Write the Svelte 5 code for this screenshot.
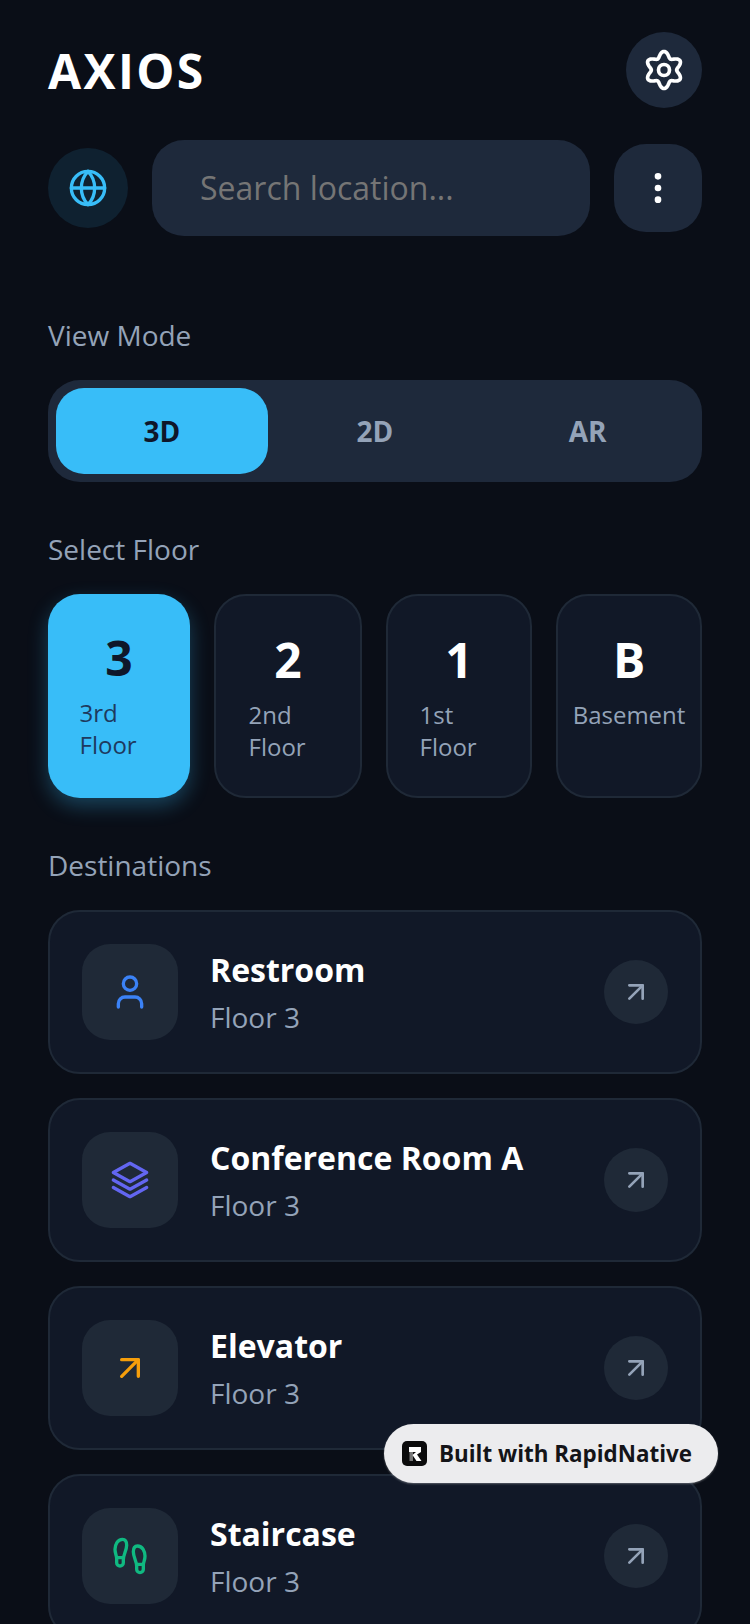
<script>
	const modes = ['3D', '2D', 'AR'];
	const floors = [
		{ id: '3', name: '3rd Floor' },
		{ id: '2', name: '2nd Floor' },
		{ id: '1', name: '1st Floor' },
		{ id: 'B', name: 'Basement' }
	];
	const destinations = [
		{ name: 'Restroom', kind: 'person' },
		{ name: 'Conference Room A', kind: 'layers' },
		{ name: 'Elevator', kind: 'arrow' },
		{ name: 'Staircase', kind: 'feet' }
	];

	// wavy six lobed gear outline
	let gearPath = '';
	for (let i = 0; i < 120; i++) {
		const a = (i / 120) * Math.PI * 2;
		const r = 8.5 + 1.6 * Math.cos(6 * (a - Math.PI / 2));
		const x = 12 + r * Math.cos(a);
		const y = 12 + r * Math.sin(a);
		gearPath += (i === 0 ? 'M' : 'L') + x.toFixed(2) + ' ' + y.toFixed(2);
	}
	gearPath += 'Z';
</script>

<div class="page">
	<header class="header">
		<h1>AXIOS</h1>
		<button class="gear">
			<svg width="44" height="44" viewBox="0 0 24 24" class="icon" stroke="#fff">
				<path d={gearPath} />
				<circle cx="12" cy="12" r="3" />
			</svg>
		</button>
	</header>

	<div class="search-row">
		<div class="globe">
			<svg width="40" height="40" viewBox="0 0 24 24" class="icon" stroke="#38bdf8">
				<circle cx="12" cy="12" r="10" />
				<path d="M12 2a14.5 14.5 0 0 0 0 20 14.5 14.5 0 0 0 0-20" />
				<path d="M2 12h20" />
			</svg>
		</div>
		<div class="search">Search location...</div>
		<button class="more">
			<svg width="40" height="40" viewBox="0 0 24 24" class="icon" stroke="#fff">
				<circle cx="12" cy="5" r="1" />
				<circle cx="12" cy="12" r="1" />
				<circle cx="12" cy="19" r="1" />
			</svg>
		</button>
	</div>

	<h2 class="label first">View Mode</h2>
	<div class="modes">
		{#each modes as mode, i}
			<div class="mode" class:active={i === 0}>{mode}</div>
		{/each}
	</div>

	<h2 class="label">Select Floor</h2>
	<div class="floors">
		{#each floors as floor, i}
			<div class="floor" class:active={i === 0}>
				<div class="floor-id">{floor.id}</div>
				<div class="floor-name" class:wide={floor.id === 'B'}>{floor.name}</div>
			</div>
		{/each}
	</div>

	<h2 class="label">Destinations</h2>
	<div class="list">
		{#each destinations as item}
			<div class="card">
				<div class="card-icon">
					{#if item.kind === 'person'}
						<svg width="40" height="40" viewBox="0 0 24 24" class="icon" stroke="#3b82f6">
							<path d="M19 21v-2a4 4 0 0 0-4-4H9a4 4 0 0 0-4 4v2" />
							<circle cx="12" cy="7" r="4" />
						</svg>
					{:else if item.kind === 'layers'}
						<svg width="40" height="40" viewBox="0 0 24 24" class="icon" stroke="#6366f1">
							<path d="M12 2 2 7.5 12 13l10-5.5z" />
							<path d="m2 12 10 5.5L22 12" />
							<path d="m2 16.5 10 5.5 10-5.5" />
						</svg>
					{:else if item.kind === 'arrow'}
						<svg width="40" height="40" viewBox="0 0 24 24" class="icon" stroke="#f59e0b">
							<path d="M7 7h10v10" />
							<path d="M7 17 17 7" />
						</svg>
					{:else}
						<svg width="40" height="40" viewBox="0 0 24 24" class="icon" stroke="#10b981">
							<path d="M4 16v-2.38C4 11.5 2.97 10.5 3 8c.03-2.72 1.49-6 4.5-6C9.37 2 10 3.8 10 5.5c0 3.11-2 5.66-2 8.68V16a2 2 0 1 1-4 0Z" />
							<path d="M20 20v-2.38c0-2.12 1.03-3.12 1-5.62-.03-2.72-1.44-6-4.5-6C14.63 6 14 7.8 14 9.5c0 3.16 2 5.64 2 8.68V20a2 2 0 1 0 4 0Z" />
							<path d="M16 17h4" />
							<path d="M4 13h4" />
						</svg>
					{/if}
				</div>
				<div class="card-text">
					<div class="card-title">{item.name}</div>
					<div class="card-sub">Floor 3</div>
				</div>
				<div class="go">
					<svg width="32" height="32" viewBox="0 0 24 24" class="icon" stroke="#94a3b8">
						<path d="M7 7h10v10" />
						<path d="M7 17 17 7" />
					</svg>
				</div>
			</div>
		{/each}
	</div>

	<div class="badge">
		<svg width="25" height="25" viewBox="0 0 25 25">
			<rect width="25" height="25" rx="5" fill="#0b0b0c" />
			<rect x="7.5" y="11" width="3.5" height="9" fill="#777" />
			<path d="M7 6h12v5l-4 2.5 4.5 6.5h-5l-4-6 3.5-3H7z" fill="#fff" />
		</svg>
		<span>Built with RapidNative</span>
	</div>
</div>

<style>
	:global(body) {
		background: #0a0e17;
	}

	.page {
		position: relative;
		box-sizing: border-box;
		height: 1624px;
		overflow: hidden;
		padding: 32px 48px 0;
		background: #0a0e17;
		font-family: 'Open Sans', sans-serif;
	}

	.icon {
		display: block;
		fill: none;
		stroke-width: 2;
		stroke-linecap: round;
		stroke-linejoin: round;
	}

	button {
		border: none;
		padding: 0;
		display: flex;
		align-items: center;
		justify-content: center;
		background: #1e293b;
	}

	.header {
		display: flex;
		align-items: center;
		justify-content: space-between;
		margin-bottom: 32px;
	}

	h1 {
		margin: 0;
		font-size: 48px;
		font-weight: 700;
		letter-spacing: 2.4px;
		color: #fff;
	}

	.gear {
		width: 76px;
		height: 76px;
		border-radius: 50%;
	}

	.search-row {
		display: flex;
		align-items: center;
		gap: 24px;
	}

	.globe {
		width: 80px;
		height: 80px;
		flex: none;
		border-radius: 50%;
		display: flex;
		align-items: center;
		justify-content: center;
		background: #0f2130;
	}

	.search {
		flex: 1;
		height: 96px;
		box-sizing: border-box;
		padding-left: 48px;
		border-radius: 32px;
		background: #1e293b;
		color: #757575;
		font-size: 32px;
		line-height: 96px;
	}

	.more {
		width: 88px;
		height: 88px;
		flex: none;
		border-radius: 32px;
	}

	.label {
		margin: 47px 0 25px;
		font-size: 28px;
		font-weight: 400;
		line-height: 40px;
		color: #94a3b8;
	}

	.label.first {
		margin-top: 79px;
	}

	.modes {
		display: grid;
		grid-template-columns: repeat(3, 1fr);
		padding: 8px;
		border-radius: 32px;
		background: #1e293b;
	}

	.mode {
		height: 86px;
		border-radius: 28px;
		text-align: center;
		font-size: 28px;
		font-weight: 700;
		line-height: 86px;
		color: #94a3b8;
	}

	.mode.active {
		margin-right: 1px;
		background: #38bdf8;
		color: #0f172a;
	}

	.floors {
		display: grid;
		grid-template-columns: 142px 148px 146px 146px;
		gap: 24px;
	}

	.floor {
		box-sizing: border-box;
		height: 204px;
		padding-top: 31px;
		display: flex;
		flex-direction: column;
		align-items: center;
		border: 2px solid #1f2937;
		border-radius: 32px;
		background: #111827;
	}

	.floor.active {
		border: none;
		background: #38bdf8;
		box-shadow: 0 8px 20px rgba(56, 189, 248, 0.3);
	}

	.floor-id {
		font-size: 48px;
		font-weight: 700;
		line-height: 65px;
		color: #fff;
	}

	.floor-name {
		width: 79px;
		margin-top: 7px;
		font-size: 24px;
		line-height: 32px;
		color: #94a3b8;
	}

	.floor-name.wide {
		width: auto;
		white-space: nowrap;
	}

	.active .floor-id {
		color: #0f172a;
	}

	.active .floor-name {
		color: #1e3a5f;
	}

	.list {
		display: flex;
		flex-direction: column;
		gap: 24px;
	}

	.card {
		display: flex;
		align-items: center;
		flex: none;
		height: 164px;
		box-sizing: border-box;
		padding: 0 32px;
		border: 2px solid #1f2937;
		border-radius: 32px;
		background: #111827;
	}

	.card-icon {
		width: 96px;
		height: 96px;
		flex: none;
		border-radius: 28px;
		display: flex;
		align-items: center;
		justify-content: center;
		background: #1f2937;
	}

	.card-text {
		flex: 1;
		margin-left: 32px;
	}

	.card-title {
		font-size: 32px;
		font-weight: 700;
		line-height: 44px;
		color: #fff;
	}

	.card-sub {
		margin-top: 6px;
		font-size: 28px;
		line-height: 38px;
		color: #94a3b8;
	}

	.go {
		width: 64px;
		height: 64px;
		flex: none;
		border-radius: 50%;
		display: flex;
		align-items: center;
		justify-content: center;
		background: #1f2937;
	}

	.badge {
		position: absolute;
		left: 384px;
		top: 1424px;
		width: 334px;
		height: 59px;
		box-sizing: border-box;
		padding-left: 18px;
		display: flex;
		align-items: center;
		gap: 12px;
		border-radius: 30px;
		background: #ececee;
		box-shadow: 0 1px 2px rgba(255, 255, 255, 0.3);
		font-size: 22.4px;
		font-weight: 700;
		color: #141418;
	}
</style>
